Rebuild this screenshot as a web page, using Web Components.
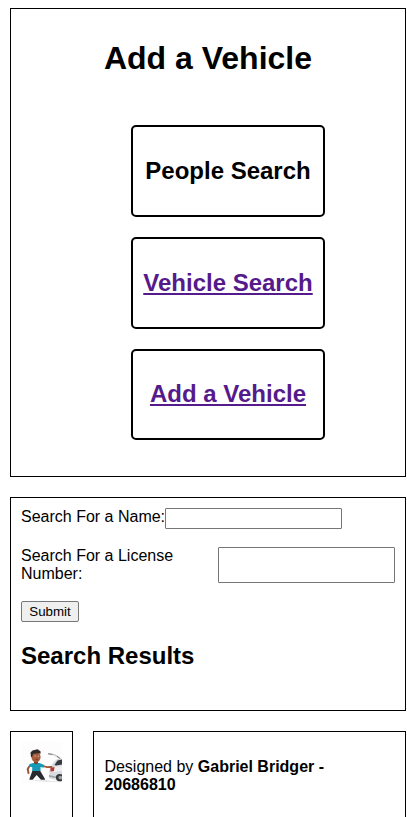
<!DOCTYPE html>
<html lang="en">
<head>
<meta charset="utf-8">
<title>Add a Vehicle</title>
<style>
html { overflow: hidden; }
body { margin: 0; background: #fff; color: #000; font-family: "Liberation Sans", Arial, sans-serif; font-size: 16px; line-height: 18px; }
</style>
</head>
<body>
<app-page></app-page>
<script>
function define(name, html) {
  const template = document.createElement('template');
  template.innerHTML = html;
  customElements.define(name, class extends HTMLElement {
    constructor() {
      super();
      this.attachShadow({ mode: 'open' }).appendChild(template.content.cloneNode(true));
    }
  });
}

define('bordered-panel', `
<style>
:host { display: block; box-sizing: border-box; border: 1px solid #000; padding: 10px; min-width: 0; }
</style>
<slot></slot>`);

define('nav-card', `
<style>
:host { display: flex; box-sizing: border-box; width: 194px; height: 92px; border: 2px solid #000; border-radius: 5px; align-items: center; justify-content: center; color: #000; }
:host([short]) { height: 91px; }
:host([link]) { color: #551a8b; }
:host([link]) span { text-decoration: underline; text-decoration-skip-ink: none; }
h2 { margin: 0; font-size: 24px; line-height: 28px; white-space: nowrap; }
:host([short]) h2 { padding-bottom: 1px; }
</style>
<h2><span><slot></slot></span></h2>`);

define('page-header', `
<style>
:host { display: block; }
bordered-panel { height: 469px; }
h1 { margin: 21px 0 0; font-size: 32px; line-height: 37px; text-align: center; }
nav { display: flex; flex-direction: column; align-items: center; gap: 20px; padding: 48px 0 0 40px; }
</style>
<bordered-panel>
<h1>Add a Vehicle</h1>
<nav>
<nav-card>People Search</nav-card>
<nav-card link>Vehicle Search</nav-card>
<nav-card link short>Add a Vehicle</nav-card>
</nav>
</bordered-panel>`);

define('search-field', `
<style>
:host { display: flex; }
label { flex: 0 1 auto; min-width: 0; }
input { flex: none; box-sizing: border-box; width: 177px; height: 21px; margin: 0; border: 1px solid #767676; border-radius: 1px; background: #fff; padding: 1px 2px; }
:host([tall]) { justify-content: space-between; }
:host([tall]) label { width: 197px; }
:host([tall]) input { height: 36px; }
</style>
<label><slot></slot></label><input type="text">`);

define('search-panel', `
<style>
:host { display: block; }
bordered-panel { height: 214px; }
button { display: block; box-sizing: border-box; width: 58px; height: 21px; margin: 18px 0 0; padding: 0; border: 1px solid #767676; border-radius: 2px; background: #efefef; color: #000; font: 13.333px/19px "Liberation Sans", Arial, sans-serif; text-align: center; }
search-field[tall] { margin-top: 18px; }
h2 { margin: 20px 0 0; font-size: 24px; line-height: 28px; }
</style>
<bordered-panel>
<search-field>Search For a Name:</search-field>
<search-field tall>Search For a License Number:</search-field>
<button type="button">Submit</button>
<h2>Search Results</h2>
</bordered-panel>`);

define('car-picture', `
<style>
:host { display: block; width: 41px; height: 41px; }
svg { display: block; }
</style>
<svg width="41" height="41" viewBox="0 0 41 41" aria-hidden="true">
<rect width="41" height="41" fill="#fdfdfd"/>
<path d="M8 38h18l3 1h12v1H24z" fill="#e8e8e8"/>
<path d="M27.500 12l6 .8 3 2 4 2.700" fill="none" stroke="#c9cbce" stroke-width="1.500"/>
<path d="M27 11.700l4.500.7M36 14l3 2.500" fill="none" stroke="#666" stroke-width=".8"/>
<path d="M28.500 27l3.500-6 4-4h5v21l-8-.5-5-1.500z" fill="#d9dbdf"/>
<path d="M33.500 23l3-4.500 4.500-1v5l-6 .9z" fill="#343b42"/>
<path d="M33 25l8-1v5l-8 1z" fill="#eeeff1"/>
<path d="M29.500 26l4-1-.5 4-3.500.5z" fill="#b8342d"/>
<path d="M28 33l7 1.500v1.500l-7-1z" fill="#a0a3a8"/>
<circle cx="38.600" cy="35.600" r="3.700" fill="#33363a"/>
<circle cx="39.300" cy="35.600" r="1.900" fill="#9c9fa3"/>
<path d="M11.500 28.500h7.500l5 8.500v.8h-4L15.600 33l-4 4.800H8.400l.2-1.300z" fill="#282b30"/>
<path d="M8 24.800l-1.300 2.400.8 3.800" fill="none" stroke="#9a5738" stroke-width="2" stroke-linecap="round"/>
<path d="M22 24l4 1.200 4.500-.2" fill="none" stroke="#9a5738" stroke-width="1.800" stroke-linecap="round"/>
<path d="M8.500 22l4-1h6l4.700 2-.6 2.700-3.100-.6v4h-8.300v-4l-3.700-.4z" fill="#1699b6"/>
<path d="M13 19h4v2.300l-2 1-2-1z" fill="#7b3e27"/>
<ellipse cx="15" cy="15" rx="4.600" ry="5.300" fill="#a85e3c"/>
<path d="M10 15l-.5-4.500 2-2 5-1.200 3 2 .1 2.500-1.400-.6-6 .5-1.200 3.300z" fill="#302a28"/>
<circle cx="14.200" cy="14.100" r=".7" fill="#d9cbc6"/><circle cx="17.500" cy="14.100" r=".7" fill="#d9cbc6"/>
<path d="M14.500 17.700h2.500" stroke="#6c3728" stroke-width=".9"/>
</svg>`);

define('page-footer', `
<style>
:host { display: grid; grid-template-columns: 63px 1fr; gap: 20px; height: 86px; overflow: hidden; }
bordered-panel { height: 110px; }
p { margin: 16px 0 0 .4px; }
</style>
<bordered-panel><car-picture></car-picture></bordered-panel>
<bordered-panel><p><span>Designed by </span><b>Gabriel Bridger -</b><br><b>20686810</b></p></bordered-panel>`);

define('app-page', `
<style>
:host { display: flex; flex-direction: column; gap: 20px; box-sizing: border-box; width: 407px; height: 817px; padding: 8px 1px 0 10px; overflow: hidden; }
</style>
<page-header></page-header>
<search-panel></search-panel>
<page-footer></page-footer>`);
</script>
</body>
</html>
